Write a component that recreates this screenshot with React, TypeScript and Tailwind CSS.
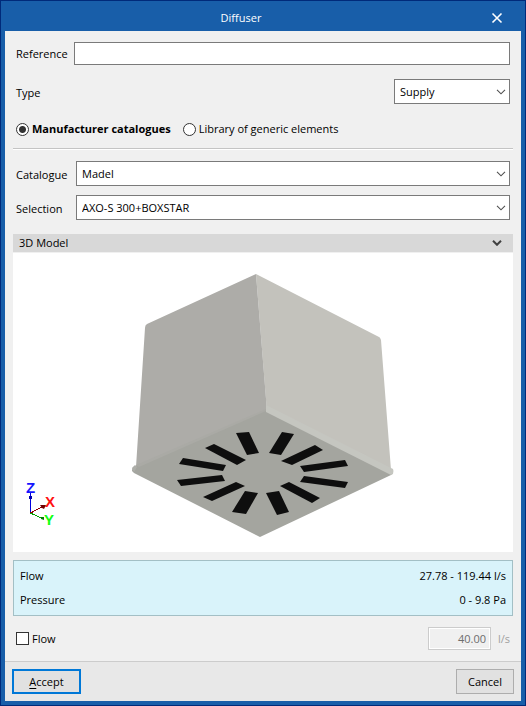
import { useId, useState, type ReactNode } from "react";

function Chevron({ bold = false }: { bold?: boolean }) {
  return (
    <svg width="10" height="6" viewBox="0 0 10 6" fill="none" aria-hidden="true">
      <path
        d="M1 0.8 5 4.8 9 0.8"
        stroke={bold ? "#404040" : "#505050"}
        strokeWidth={bold ? 2 : 1.1}
      />
    </svg>
  );
}

function Select({ id, options, className = "" }: { id: string; options: string[]; className?: string }) {
  return (
    <div className={`relative ${className}`}>
      <select
        id={id}
        className="block h-[25px] w-full appearance-none rounded-none border border-[#7a7a7a] bg-white pl-[5px] pr-6 text-black outline-none"
      >
        {options.map((option) => (
          <option key={option}>{option}</option>
        ))}
      </select>
      <span className="pointer-events-none absolute inset-y-0 right-1 flex items-center">
        <Chevron />
      </span>
    </div>
  );
}

function SourceOption({
  label,
  checked,
  onSelect,
}: {
  label: string;
  checked: boolean;
  onSelect: () => void;
}) {
  return (
    <label className={`flex items-center gap-[3px] ${checked ? "font-bold" : ""}`}>
      <input
        type="radio"
        name="source"
        checked={checked}
        onChange={onSelect}
        className="m-0 size-[13px] appearance-none rounded-full border border-[#333333] bg-white checked:bg-[radial-gradient(circle,#333333_0_3px,#ffffff_4px)]"
      />
      {label}
    </label>
  );
}

function InfoRow({ label, children }: { label: string; children: ReactNode }) {
  return (
    <div className="flex h-6 items-center justify-between">
      <dt>{label}</dt>
      <dd>{children}</dd>
    </div>
  );
}

const SLOTS = [
  "236,433 249,432 259,453 247,455",
  "205,448 214,444 246,460 237,465",
  "179,464 183,458 226,465 223,471",
  "177,480 222,475 225,481 181,486",
  "203,497 236,482 245,486 212,501",
  "232,512 245,491 258,493 246,514",
  "266,493 279,491 289,512 277,515",
  "280,486 289,482 320,498 312,503",
  "300,482 304,476 348,482 345,488",
  "300,466 345,460 348,466 304,472",
  "281,461 315,445 323,450 292,465",
  "269,453 282,432 294,434 281,455",
];

function Model() {
  return (
    <svg
      viewBox="13 253 500 299"
      preserveAspectRatio="xMidYMid meet"
      className="block h-full min-h-[299px] w-full"
      role="img"
      aria-label="3D view of the diffuser"
    >
      <path d="M256 274 379 337Q380 337 381 340L391 470 267 412Z" fill="#c3c2bc" />
      <path d="M256 274 147 324Q145 325 145 328L136 467 262 420 267 411Z" fill="#adaca8" />
      <path d="M266 410 135 466Q132 467 132 471L134 473 260 537 391 475 393 473Z" fill="#a4a59f" />
      <path d="M266 405 393 469Q394 471 393 474L391 475 266 412Z" fill="#c5c6c0" />
      <path d="M136 465 266 409 266 411 139 467Z" fill="#aaaaa5" />
      <path d="M132 468 135 465 137 467 134 472Z" fill="#adaea9" />
      {SLOTS.map((points) => (
        <polygon key={points} points={points} fill="#0e0e0e" />
      ))}
      <g fill="none" strokeWidth="1" shapeRendering="crispEdges">
        <path d="M30.5 513V492" stroke="#0000e0" />
        <path d="M30.5 513 44 506" stroke="#900000" />
        <path d="M30.5 513 43 519" stroke="#00a000" />
      </g>
      <path d="M29 496h3v3h-3z" fill="#0000b0" />
      <path d="m40 505 6 0-2 4-2-1z" fill="#700000" />
      <path d="m41 517 3 0v3l-3-1z" fill="#008000" />
      <g fontFamily="Liberation Sans, sans-serif" fontSize="15" fontWeight="bold">
        <text x="26" y="493" fill="#1515ff">Z</text>
        <text x="45" y="507" fill="#ff1010">X</text>
        <text x="44" y="525" fill="#10ff10">Y</text>
      </g>
    </svg>
  );
}

export default function App() {
  const id = useId();
  const [source, setSource] = useState("manufacturer");
  const [limitFlow, setLimitFlow] = useState(false);
  const [modelOpen, setModelOpen] = useState(true);

  return (
    <div className="flex min-h-screen flex-col border border-[#002a7a] bg-[#185ea9] px-1 pb-1 font-['Open_Sans',sans-serif] text-[11px] leading-4 text-black">
      <header className="grid h-[30px] grid-cols-[1fr_auto_1fr] items-center text-white">
        <h1 className="col-start-2 pt-1 pr-11">Diffuser</h1>
        <button type="button" aria-label="Close" className="mr-[18px] justify-self-end pt-1">
          <svg width="12" height="12" viewBox="0 0 12 12" fill="none" aria-hidden="true">
            <path d="M1.5 1.5 10.5 10.5M10.5 1.5 1.5 10.5" stroke="white" strokeWidth="1.6" />
          </svg>
        </button>
      </header>

      <main className="flex flex-1 flex-col bg-[#f0f0f0] px-2 pt-[11px]">
        <div className="grid grid-cols-[58px_1fr] items-center px-[3px]">
          <label htmlFor={`${id}-ref`}>Reference</label>
          <input
            id={`${id}-ref`}
            type="text"
            className="h-[23px] w-full min-w-0 border border-[#7a7a7a] bg-white px-1 outline-none"
          />
        </div>

        <div className="mt-[14px] flex items-center justify-between px-[3px]">
          <label htmlFor={`${id}-type`} className="pt-[2px]">Type</label>
          <Select id={`${id}-type`} options={["Supply", "Return"]} className="w-[116px]" />
        </div>

        <div role="radiogroup" aria-label="Source" className="mt-[17px] flex items-center gap-3 px-[3px]">
          <SourceOption
            label="Manufacturer catalogues"
            checked={source === "manufacturer"}
            onSelect={() => setSource("manufacturer")}
          />
          <SourceOption
            label="Library of generic elements"
            checked={source === "generic"}
            onSelect={() => setSource("generic")}
          />
        </div>

        <hr className="mt-[11px] h-[2px] border-t border-b border-t-[#c4c4c4] border-b-white" />

        <div className="mt-[11px] grid grid-cols-[60px_1fr] items-center gap-y-[9px] px-[3px]">
          <label htmlFor={`${id}-catalogue`} className="pt-[2px]">Catalogue</label>
          <Select id={`${id}-catalogue`} options={["Madel"]} />
          <label htmlFor={`${id}-selection`} className="pt-[2px]">Selection</label>
          <Select id={`${id}-selection`} options={["AXO-S 300+BOXSTAR"]} />
        </div>

        <button
          type="button"
          aria-expanded={modelOpen}
          onClick={() => setModelOpen(!modelOpen)}
          className="mt-[14px] flex h-[18px] items-center justify-between bg-[#d8d8d8] pr-[11px] pl-[6px]"
        >
          3D Model
          <Chevron bold />
        </button>
        <div className="mt-px min-h-[299px] flex-1 bg-white">{modelOpen && <Model />}</div>

        <dl className="mt-2 border border-[#a3bfc5] bg-[#d9f3fa] px-[6px] py-[3px]">
          <InfoRow label="Flow">27.78 - 119.44 l/s</InfoRow>
          <InfoRow label="Pressure">0 - 9.8 Pa</InfoRow>
        </dl>

        <div className="my-[11px] flex items-center px-[3px]">
          <label className="flex flex-1 items-center gap-[3px]">
            <input
              type="checkbox"
              checked={limitFlow}
              onChange={(event) => setLimitFlow(event.target.checked)}
              className="m-0 size-[13px] appearance-none border border-[#333333] bg-white checked:bg-[#333333]"
            />
            Flow
          </label>
          <input
            type="text"
            aria-label="Flow in l/s"
            defaultValue="40.00"
            disabled={!limitFlow}
            className="h-[23px] w-[63px] border border-[#cccccc] bg-[#f0f0f0] px-1 pb-px text-right text-[#6d6d6d] shadow-[inset_0_0_0_1px_#ffffff]"
          />
          <span className="w-[19px] text-right text-[#a0a0a0]">l/s</span>
        </div>
      </main>

      <footer className="flex items-center justify-between border-t border-[#cccccc] bg-[#e8e8e8] px-[7px] py-[7px]">
        <button type="button" className="h-[25px] w-[69px] border-2 border-[#0078d7] bg-[#e1e1e1]">
          <span className="underline underline-offset-2">A</span>ccept
        </button>
        <button type="button" className="h-[25px] w-[58px] border border-[#adadad] bg-[#e1e1e1]">
          Cancel
        </button>
      </footer>
    </div>
  );
}
